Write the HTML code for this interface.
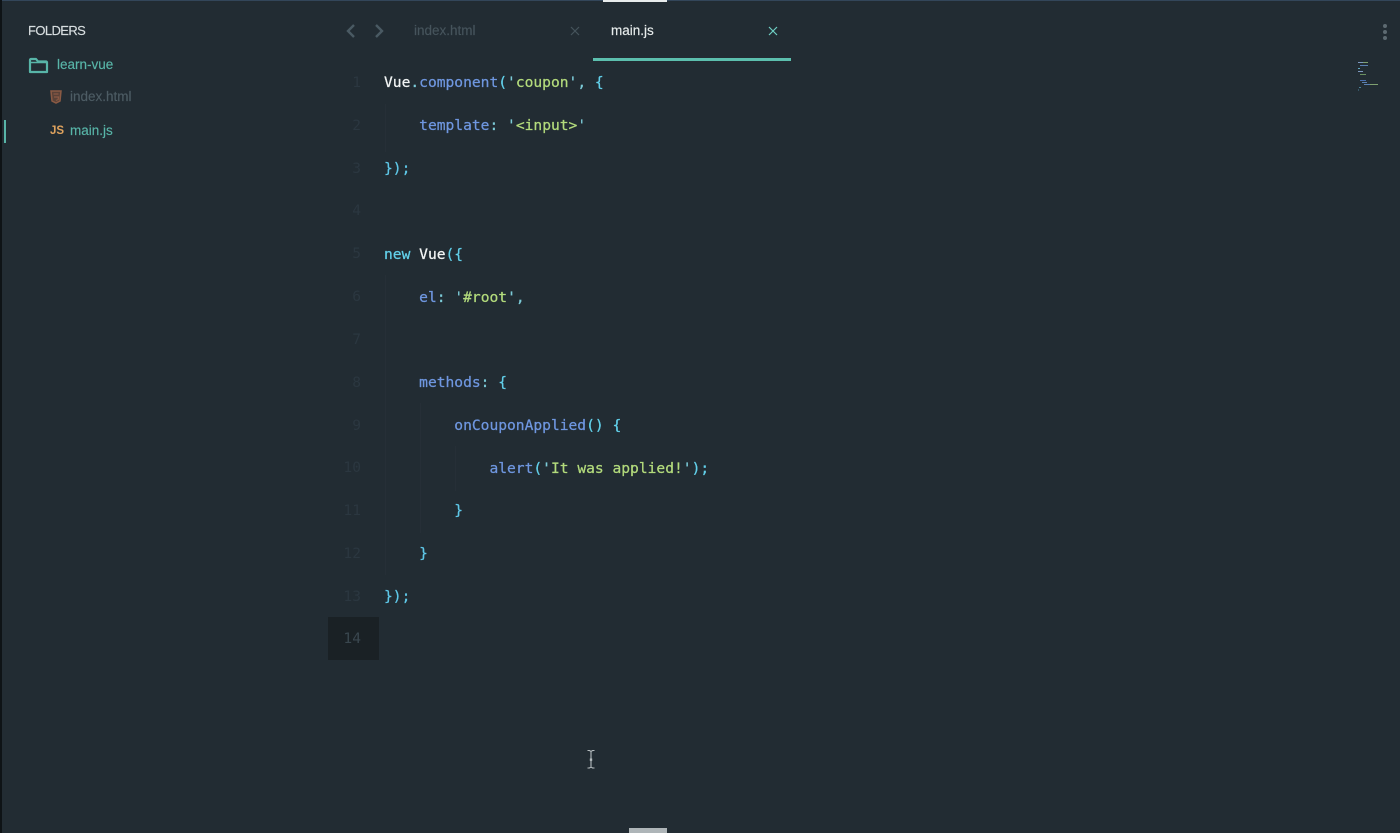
<!DOCTYPE html>
<html lang="en">
<head>
<meta charset="utf-8">
<title>main.js</title>
<style>
html,body{margin:0;padding:0;width:1400px;height:833px;overflow:hidden;background:#222c33}
body{position:relative;font-family:"Liberation Sans",sans-serif}
div,svg{position:absolute}
#w{left:0;top:0;width:1400px;height:833px;filter:blur(.3px)}
.top{left:0;top:0;width:1400px;height:1px;background:#33465a}
.topw{left:603px;top:0;width:64px;height:2px;background:#e8ecec}
.edge{left:0;top:0;width:2px;height:833px;background:#0e1316}
.side{font-size:13.5px;line-height:20px;white-space:nowrap;-webkit-text-stroke:.15px currentColor}
.code{left:384px;font-family:"DejaVu Sans Mono","Liberation Mono",monospace;font-size:14.6px;line-height:20px;white-space:pre;color:#5fc8e8;-webkit-text-stroke:.25px currentColor}
.num{width:50px;left:311px;text-align:right;font-family:"DejaVu Sans Mono",monospace;font-size:14.6px;line-height:20px;color:#2b3740}
.w{color:#f2f5f5}.b{color:#6f97e0}.g{color:#b3db7c}.c{color:#62d0ea}.p{color:#7ccbd8}
.guide{width:1px;background:#262f37}
</style>
</head>
<body>
<div id="w">
<div class="top"></div><div class="topw"></div><div class="edge"></div>

<div class="side" style="left:28px;top:21px;color:#d8dee0;font-size:13px;letter-spacing:-.6px">FOLDERS</div>
<svg style="left:28px;top:57px" width="21" height="17" viewBox="0 0 21 17"><path d="M2 15V3a1 1 0 0 1 1-1h5l2 2.500h8a1 1 0 0 1 1 1V15z" fill="none" stroke="#58b5a8" stroke-width="2.200" stroke-linejoin="round"/><path d="M2 5.500h17" stroke="#58b5a8" stroke-width="1.500"/></svg>
<div class="side" style="left:57px;top:55px;color:#58b5a8">learn-vue</div>

<svg style="left:50px;top:90px" width="12" height="14" viewBox="0 0 12 14"><path d="M1 1h10l-1 10-4 2-4-2z" fill="#5a4238" stroke="#8a5a44" stroke-width="1.500"/><path d="M3.500 4h5M4 7h4.500l-.3 2.500-2.200 1" fill="none" stroke="#8a5a44" stroke-width="1.200"/></svg>
<div class="side" style="left:70px;top:87px;color:#4d5c64">index.html</div>

<div style="left:4px;top:120px;width:2px;height:23px;background:#58b5a8"></div>
<div style="left:50px;top:125px;font-size:11.500px;line-height:12px;font-weight:bold;color:#e0a35e">JS</div>
<div class="side" style="left:70px;top:121px;color:#58b5a8">main.js</div>

<svg style="left:344px;top:23px" width="46" height="16" viewBox="0 0 46 16"><path d="M10 2L4 8l6 6" fill="none" stroke="#4a5a63" stroke-width="2.400"/><path d="M32 2l6 6-6 6" fill="none" stroke="#4a5a63" stroke-width="2.400"/></svg>

<div class="side" style="left:414px;top:21px;color:#46545c">index.html</div>
<svg style="left:570px;top:26px" width="10" height="10" viewBox="0 0 10 10"><path d="M1 1l8 8M9 1l-8 8" stroke="#46545c" stroke-width="1.200"/></svg>
<div class="side" style="left:611px;top:21px;color:#e8eded">main.js</div>
<svg style="left:768px;top:26px" width="10" height="10" viewBox="0 0 10 10"><path d="M1 1l8 8M9 1l-8 8" stroke="#6fd0c4" stroke-width="1.200"/></svg>
<div style="left:593px;top:58px;width:198px;height:3px;background:#5cbfae"></div>

<div class="guide" style="left:385px;top:104px;height:48px"></div>
<div class="guide" style="left:385px;top:275px;height:300px"></div>
<div class="guide" style="left:420px;top:403px;height:130px"></div>
<div class="guide" style="left:455px;top:446px;height:45px"></div>

<div style="left:328px;top:617px;width:51px;height:43px;background:#1a2125"></div>

<div class="num" style="top:73px">1</div>
<div class="num" style="top:116px">2</div>
<div class="num" style="top:159px">3</div>
<div class="num" style="top:201px">4</div>
<div class="num" style="top:244px">5</div>
<div class="num" style="top:287px">6</div>
<div class="num" style="top:330px">7</div>
<div class="num" style="top:373px">8</div>
<div class="num" style="top:416px">9</div>
<div class="num" style="top:458px">10</div>
<div class="num" style="top:501px">11</div>
<div class="num" style="top:544px">12</div>
<div class="num" style="top:587px">13</div>
<div class="num" style="top:629px;color:#3a474f">14</div>

<div class="code" style="top:73px"><span class="w">Vue</span><span class="p">.</span><span class="b">component</span><span class="c">(</span><span class="p">'</span><span class="g">coupon</span><span class="p">',</span> <span class="c">{</span></div>
<div class="code" style="top:116px">    <span class="b">template</span><span class="p">:</span> <span class="p">'</span><span class="g">&lt;input&gt;</span><span class="p">'</span></div>
<div class="code" style="top:159px">});</div>
<div class="code" style="top:245px"><span class="c">new</span> <span class="w">Vue</span><span class="c">({</span></div>
<div class="code" style="top:288px">    <span class="b">el</span><span class="p">:</span> <span class="p">'</span><span class="g">#root</span><span class="p">',</span></div>
<div class="code" style="top:373px">    <span class="b">methods</span><span class="p">:</span> <span class="c">{</span></div>
<div class="code" style="top:416px">        <span class="b">onCouponApplied</span><span class="c">()</span> <span class="c">{</span></div>
<div class="code" style="top:459px">            <span class="b">alert</span><span class="c">(</span><span class="p">'</span><span class="g">It was applied!</span><span class="p">'</span><span class="c">);</span></div>
<div class="code" style="top:501px">        }</div>
<div class="code" style="top:544px">    }</div>
<div class="code" style="top:587px">});</div>

<div style="left:1383px;top:24px;width:4px;height:4px;border-radius:2px;background:#5d6a71"></div>
<div style="left:1383px;top:30px;width:4px;height:4px;border-radius:2px;background:#5d6a71"></div>
<div style="left:1383px;top:36px;width:4px;height:4px;border-radius:2px;background:#5d6a71"></div>

<svg style="left:1356px;top:60px" width="24" height="32" viewBox="0 0 24 32">
<path d="M2 2.500h5" stroke="#7f99c0" stroke-width="1"/><path d="M7 2.500h5" stroke="#7fa070" stroke-width="1"/>
<path d="M4 5.500h8" stroke="#5a7fb0" stroke-width="1"/><path d="M2 8.500h2" stroke="#5fa8c0" stroke-width="1"/>
<path d="M2 11.500h5" stroke="#7f99c0" stroke-width="1"/><path d="M4 14.500h6" stroke="#6a9060" stroke-width="1"/>
<path d="M4 20.500h6" stroke="#4a6fb0" stroke-width="1"/><path d="M6 22.500h5" stroke="#5a7fb0" stroke-width="1"/>
<path d="M8 24.500h6" stroke="#5a7fb0" stroke-width="1"/><path d="M14 24.500h8" stroke="#7fa070" stroke-width="1"/>
<path d="M3 27.500h2M2 30h1" stroke="#4a8098" stroke-width="1"/>
</svg>

<svg style="left:585px;top:749px" width="12" height="21" viewBox="0 0 12 21"><path d="M2.500 1.500h2L6 2.500l1.500-1h2M6 2.500v15.500M2.500 19h2L6 18l1.500 1h2" fill="none" stroke="#b5bcbf" stroke-width="1.100"/><rect x="4.800" y="9.500" width="2.400" height="2.400" fill="#b5bcbf"/></svg>

<div style="left:629px;top:828px;width:38px;height:5px;background:#aeb5b8"></div>
</div>
</body>
</html>
